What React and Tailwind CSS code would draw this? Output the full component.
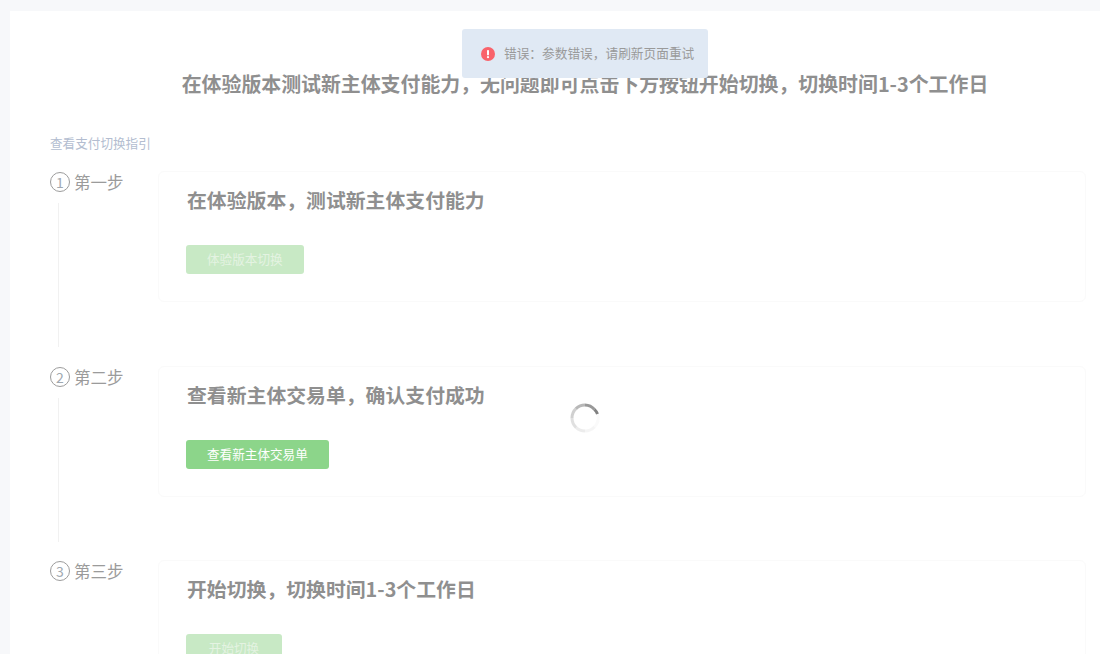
const font = { fontFamily: '"Noto Sans CJK SC", "Liberation Sans", sans-serif' };

const steps = [
  { no: 1, label: '第一步', title: '在体验版本，测试新主体支付能力', button: '体验版本切换', active: false },
  { no: 2, label: '第二步', title: '查看新主体交易单，确认支付成功', button: '查看新主体交易单', active: true },
  { no: 3, label: '第三步', title: '开始切换，切换时间1-3个工作日', button: '开始切换', active: false, last: true },
];

const spinnerParts = [
  { d: 'M24.5 6.5A13 13 0 0 1 27.5 11', o: 0.75 },
  { d: 'M15 2A13 13 0 0 1 24.5 6.5', o: 0.6 },
  { d: 'M6 5.6A13 13 0 0 1 15 2', o: 0.42 },
  { d: 'M2 15A13 13 0 0 1 6 5.6', o: 0.28 },
  { d: 'M6 24.4A13 13 0 0 1 2 15', o: 0.18 },
  { d: 'M15 28A13 13 0 0 1 6 24.4', o: 0.11 },
  { d: 'M24.4 24A13 13 0 0 1 15 28', o: 0.06 },
  { d: 'M27.5 11A13 13 0 0 1 24.4 24', o: 0.03 },
];

const Step = ({ step }) => (
  <div className={step.last ? 'flex' : 'flex h-[194.5px]'}>
    <div className="w-[108px] shrink-0 flex flex-col">
      <div className="flex items-center h-[22px] gap-1">
        <span className="w-5 h-5 rounded-full border border-[#9c9c9c] flex items-center justify-center text-sm leading-none text-[#a0a8b0]">
          {step.no}
        </span>
        <span className="text-[16.5px] leading-[22px] text-[#9b9b9b]">{step.label}</span>
      </div>
      {!step.last && <div className="ml-2 mt-[10px] w-px h-[144px] bg-[#f1f1f1]" />}
    </div>
    <div className="w-[928px] h-[131px] shrink-0 rounded-md border border-[#fafafa] pl-[27px] pt-[13px]">
      <h3 className="ml-px text-[19.85px] leading-[30px] font-bold text-[#8f8f8f]">{step.title}</h3>
      <button
        className={`mt-[30px] block h-[29px] min-w-24 px-[21px] rounded-[3px] text-[12.6px] ${
          step.active ? 'bg-[#8cd58a] text-white' : 'bg-[#c8e9c5] text-[#e4f3e2]'
        }`}
      >
        {step.button}
      </button>
    </div>
  </div>
);

export default function App() {
  return (
    <div className="relative h-screen overflow-hidden bg-[#f7f8fa] pl-[10px] pt-[11px]" style={font}>
      <div className="h-full bg-white pl-10">
        <h1 className="w-[1070px] pt-[58px] text-center text-[19.9px] leading-[30px] font-bold text-[#8f8f8f]">
          在体验版本测试新主体支付能力，无问题即可点击下方按钮开始切换，切换时间1-3个工作日
        </h1>
        <a className="block mt-[34px] h-5 text-[12.6px] leading-5 text-[#b3bdd0]">查看支付切换指引</a>
        <div className="mt-[18px]">
          {steps.map((step) => (
            <Step key={step.no} step={step} />
          ))}
        </div>
      </div>

      <div className="absolute left-[462px] top-[29px] w-[246px] h-[49px] rounded-[3px] bg-[#e0e9f4] pl-[19px] flex items-center gap-[9px]">
        <svg width="14" height="14" viewBox="0 0 14 14" className="shrink-0">
          <circle cx="7" cy="7" r="7" fill="#f9636b" />
          <rect x="6" y="3" width="2" height="5.4" rx="0.8" fill="#fff" />
          <circle cx="7" cy="10.2" r="1.1" fill="#fff" />
        </svg>
        <span className="text-[12.7px] leading-none whitespace-nowrap text-[#9a9a9a]">错误：参数错误，请刷新页面重试</span>
      </div>

      <svg width="30" height="30" viewBox="0 0 30 30" className="absolute left-[570px] top-[403px]" fill="none">
        {spinnerParts.map((part) => (
          <path key={part.d} d={part.d} stroke="#555" strokeOpacity={part.o} strokeWidth="3" />
        ))}
      </svg>
    </div>
  );
}
